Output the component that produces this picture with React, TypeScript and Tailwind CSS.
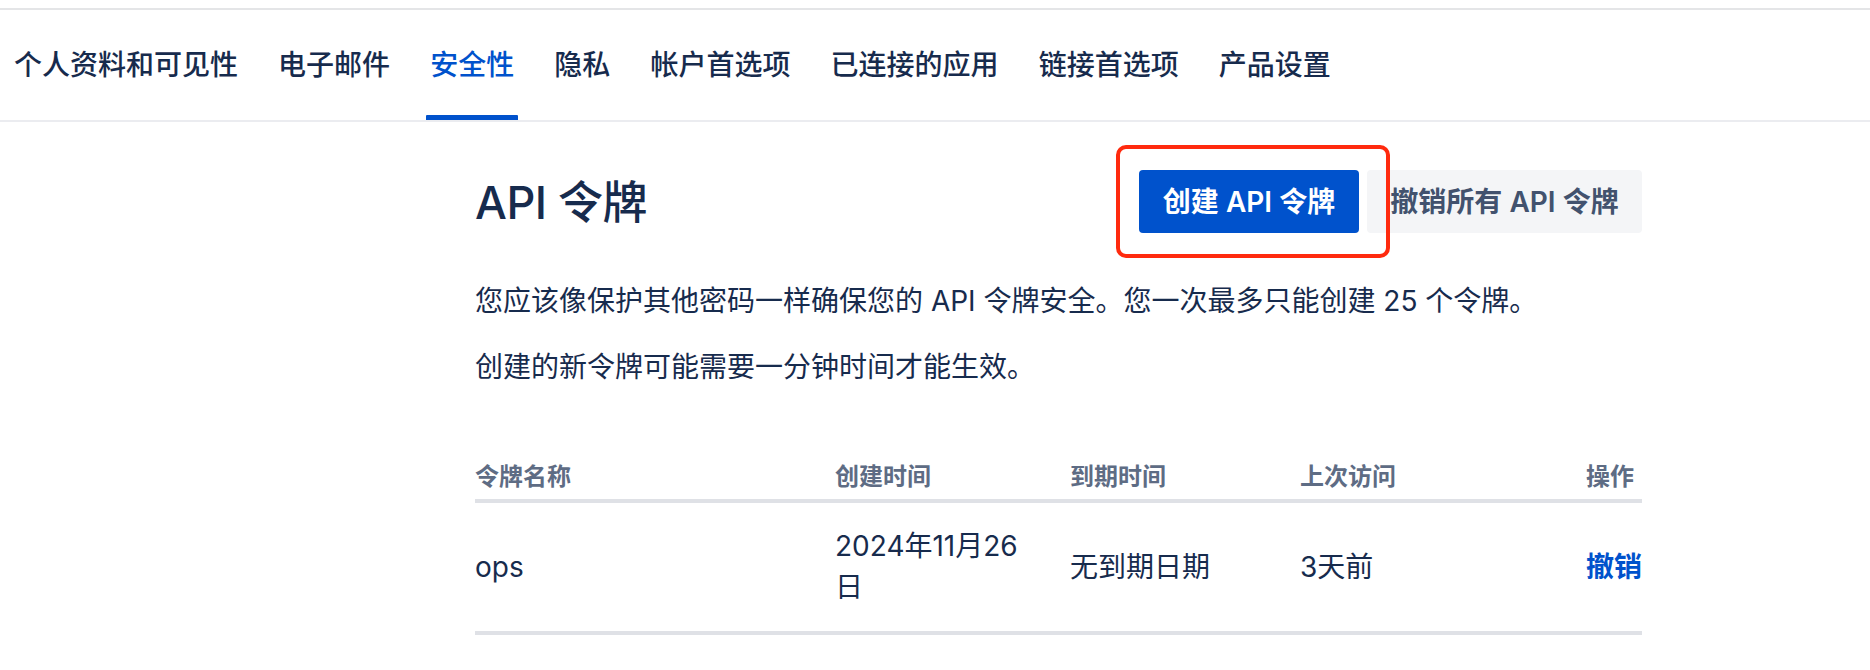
import React from "react";

const tabs = ["个人资料和可见性", "电子邮件", "安全性", "隐私", "帐户首选项", "已连接的应用", "链接首选项", "产品设置"];

export default function App() {
  return (
    <div
      className="w-[1870px] h-[670px] bg-white overflow-hidden text-[#172b4d]"
      style={{ fontFamily: '"Inter", "Noto Sans CJK SC", sans-serif' }}
    >
      <div className="h-[8px]" />
      <div className="border-t-2 border-[#e4e5e7]" />
      <nav className="h-[112px] border-b-2 border-[#ebecf0] flex items-stretch pl-[10px] gap-[32.1px]">
        {tabs.map((t) => {
          const active = t === "安全性";
          return (
            <div
              key={t}
              className={
                "relative flex items-center px-[4px] text-[28px] font-medium " +
                (active ? "text-[#0052cc]" : "text-[#172b4d]")
              }
            >
              {t}
              {active && <div className="absolute left-0 right-0 bottom-0 h-[5px] bg-[#0052cc] rounded-t-[1px]" />}
            </div>
          );
        })}
      </nav>

      <main className="ml-[475px] w-[1167px]">
        <div className="mt-[48px] h-[63px] flex items-center justify-between">
          <h1 className="text-[45px] leading-[56px] font-medium tracking-[-0.5px] text-[#172b4d] mt-[3px]">API 令牌</h1>
          <div className="flex gap-[8px] h-full">
            <div className="relative">
              <button className="w-[220px] h-[63px] rounded-[4px] bg-[#0052cc] text-white text-[28px] font-semibold flex items-center justify-center">
                创建 API 令牌
              </button>
              <div className="absolute left-[-23px] top-[-25px] w-[274px] h-[113px] border-[4px] border-[#ff2a0e] rounded-[10px] pointer-events-none" />
            </div>
            <button className="w-[275px] h-[63px] rounded-[4px] bg-[#f4f5f7] text-[#42526e] text-[28px] font-semibold flex items-center justify-center">
              撤销所有 API 令牌
            </button>
          </div>
        </div>

        <p className="mt-[48px] text-[28px] leading-[40px]">
          您应该像保护其他密码一样确保您的 API 令牌安全。您一次最多只能创建 25 个令牌。
        </p>
        <p className="mt-[26px] text-[28px] leading-[40px]">创建的新令牌可能需要一分钟时间才能生效。</p>

        <div className="mt-[74px]">
          <div className="grid grid-cols-[360px_235px_230px_286px_56px] border-b-4 border-[#dfe1e6] pb-[6px] text-[24px] leading-[32px] font-semibold text-[#5e6c84]">
            <div>令牌名称</div>
            <div>创建时间</div>
            <div>到期时间</div>
            <div>上次访问</div>
            <div>操作</div>
          </div>
          <div className="grid grid-cols-[360px_235px_230px_286px_56px] items-center border-b-4 border-[#dfe1e6] py-[23px] text-[28px] leading-[41px]">
            <div>ops</div>
            <div className="max-w-[200px]">2024年11月26日</div>
            <div>无到期日期</div>
            <div>3天前</div>
            <div className="text-[#0052cc] font-semibold whitespace-nowrap">撤销</div>
          </div>
        </div>
      </main>
    </div>
  );
}
